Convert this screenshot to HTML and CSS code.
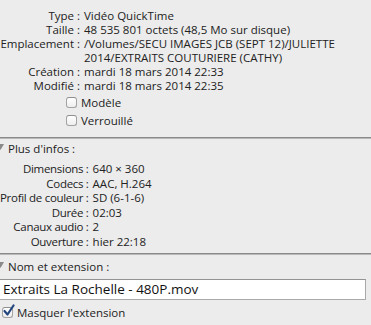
FILE: index.html
```html
<!DOCTYPE html>
<html lang="fr">
<head>
    <meta charset="UTF-8">
    <meta name="viewport" content="width=device-width, initial-scale=1.0">
    <title>Infos</title>
    <link rel="stylesheet" href="styles.css">
</head>
<body>
    <div class="panel">
        <div class="fields general">
            <span class="label">Type :</span><span class="value">Vidéo QuickTime</span>
            <span class="label">Taille :</span><span class="value">48 535 801 octets (48,5 Mo sur disque)</span>
            <span class="label">Emplacement :</span><span class="value">/Volumes/SECU IMAGES JCB (SEPT 12)/JULIETTE<br>2014/EXTRAITS COUTURIERE (CATHY)</span>
            <span class="label">Création :</span><span class="value">mardi 18 mars 2014 22:33</span>
            <span class="label">Modifié :</span><span class="value">mardi 18 mars 2014 22:35</span>
        </div>
        <div class="options">
            <label class="check"><span class="box"></span>Modèle</label>
            <label class="check"><span class="box"></span>Verrouillé</label>
        </div>
    </div>

    <div class="section">
        <div class="disclosure">
            <svg class="arrow" width="7" height="7" viewBox="0 0 7 7"><polygon points="0,0 7,0 3.5,6" fill="#8a8a8a"/></svg>
            Plus d'infos :
        </div>
        <div class="fields more">
            <span class="label">Dimensions :</span><span class="value">640 × 360</span>
            <span class="label">Codecs :</span><span class="value">AAC, H.264</span>
            <span class="label">Profil de couleur :</span><span class="value">SD (6-1-6)</span>
            <span class="label">Durée :</span><span class="value">02:03</span>
            <span class="label">Canaux audio :</span><span class="value">2</span>
            <span class="label">Ouverture :</span><span class="value">hier 22:18</span>
        </div>
    </div>

    <div class="section last">
        <div class="disclosure">
            <svg class="arrow" width="7" height="7" viewBox="0 0 7 7"><polygon points="0,0 7,0 3.5,6" fill="#8a8a8a"/></svg>
            Nom et extension :
        </div>
        <div class="name-field">Extraits La Rochelle - 480P.mov</div>
        <label class="check hide-ext">
            <span class="box">
                <svg width="14" height="14" viewBox="0 0 14 14"><path d="M2.5 7 L5.5 10.5 L11.5 1.5" fill="none" stroke="#24467f" stroke-width="2.2" stroke-linecap="round" stroke-linejoin="round"/></svg>
            </span>Masquer l'extension
        </label>
    </div>
</body>
</html>
```

FILE: styles.css
```css
body {
    margin: 0;
    background-color: #ececec;
    font-family: "Open Sans", sans-serif;
    font-size: 11.5px;
    color: #222;
    overflow: hidden;
}

.panel {
    padding-top: 9px;
    padding-bottom: 8px;
    border-bottom: 1px solid #8a8a8a;
    box-shadow: 0 1px 0 #b8b8b8;
}

.fields {
    display: grid;
    column-gap: 4px;
    line-height: 14px;
}

.general {
    grid-template-columns: 80px 1fr;
}

.more {
    grid-template-columns: max-content 1fr;
    line-height: 14.5px;
    margin-top: 7px;
}

.more .label {
    letter-spacing: -0.3px;
}

.label {
    text-align: right;
    white-space: nowrap;
}

.value {
    white-space: nowrap;
}

.options {
    padding-left: 66px;
}

.check {
    display: flex;
    align-items: center;
    height: 18px;
}

.box {
    width: 9px;
    height: 9px;
    border: 1px solid #a2a2a2;
    border-top-color: #8e8e8e;
    border-radius: 3px;
    background: linear-gradient(#ffffff, #eeeeee);
    margin-right: 4px;
    position: relative;
}

.box svg {
    position: absolute;
    left: -1px;
    top: -4px;
}

.section {
    padding-top: 3px;
    padding-bottom: 4px;
    border-bottom: 1px solid #8a8a8a;
    box-shadow: 0 1px 0 #b8b8b8;
}

.section.last {
    padding-top: 5px;
    border-bottom: none;
    box-shadow: none;
}

.disclosure {
    display: flex;
    align-items: center;
    height: 14px;
    padding-left: 8px;
    position: relative;
}

.arrow {
    position: absolute;
    left: -3px;
    top: 3px;
}

.name-field {
    box-sizing: border-box;
    margin-top: 6px;
    margin-left: -1px;
    width: 367px;
    height: 21px;
    border: 1px solid #a9a9a9;
    border-top-color: #939393;
    background-color: #fff;
    font-size: 13.5px;
    line-height: 19px;
    padding-left: 3px;
    color: #111;
}

.hide-ext {
    margin-top: 3px;
    padding-left: 2px;
}
```
